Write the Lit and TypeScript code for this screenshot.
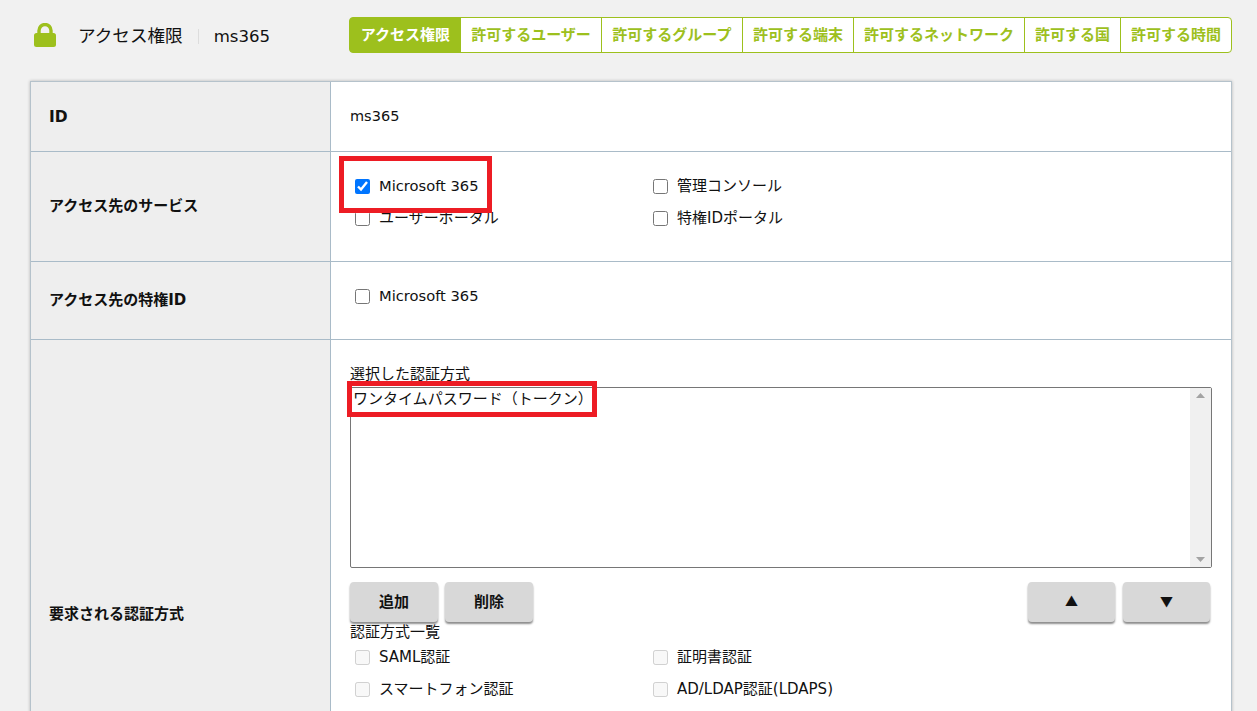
import { LitElement, html, css } from "lit";
import { customElement } from "lit/decorators.js";

const TABS = ["アクセス権限", "許可するユーザー", "許可するグループ", "許可する端末", "許可するネットワーク", "許可する国", "許可する時間"];

@customElement("app-root")
export class AppRoot extends LitElement {
  static styles = css`
    :host { display: block; height: 711px; overflow: hidden; background: #f1f1f1; color: #111;
      font-family: "DejaVu Sans", "Noto Sans CJK JP", sans-serif; font-size: 15px; position: relative; }
    * { box-sizing: border-box; }
    header { display: flex; align-items: center; height: 70px; padding: 0 25px 0 34px; }
    .lock { width: 22px; height: 24px; flex: none; }
    .title { margin: 2px 0 0 22px; font-size: 17.6px; padding-right: 15px; border-right: 1px solid #ddd; line-height: 15px; }
    .sub { margin: 2px 0 0 15px; font-size: 16.6px; }
    .tabs { margin-left: auto; display: flex; height: 36px; }
    .tab { display: flex; align-items: center; justify-content: center; padding: 0 10px; font-weight: 700; color: #9dc01d;
      background: #fff; border: 1px solid #9dc01d; margin-left: -1px; white-space: nowrap; line-height: 1; }
    .tab:first-child { background: #9dc01d; color: #fff; border-radius: 4px 0 0 4px; margin-left: 0; padding: 0 10px 0 11px; }
    .tab:nth-child(3) { padding: 0 10.5px; }
    .tab:last-child { border-radius: 0 4px 4px 0; }
    .table { margin: 11px 25px 0 30px; background: #fff; border: 1px solid #b5c2cb; box-shadow: 0 0 3px rgba(0,0,0,.25); }
    .row { display: grid; grid-template-columns: 300px 1fr; border-top: 1px solid #a9bbc8; }
    .row:first-child { border-top: 0; }
    .th { background: #eee; border-right: 1px solid #a9bbc8; font-weight: 700; display: flex; align-items: center; padding: 0 18px 4px; font-size: 15px; }
    .r1 .th { padding-bottom: 0; font-size: 15.5px; }
    .td { padding: 0 19px 0 19px; min-width: 0; }
    .r1 { height: 69px; } .r1 .td { display: flex; align-items: center; padding-bottom: 2px; font-size: 14.5px; }
    .r2 { height: 110px; } .r3 { height: 78px; } .r4 { height: 550px; }
    .checks { display: grid; grid-template-columns: repeat(2, 298px); grid-auto-rows: 32px; padding-left: 5px; }
    .r2 .checks { padding-top: 18px; }
    .r3 .checks { padding-top: 18px; }
    label { display: flex; align-items: center; height: 32px; white-space: nowrap; }
    label span { display: block; height: 20px; line-height: 20px; }
    label span.latin { font-size: 14.7px; }
    input { width: 15px; height: 15px; margin: 0 9px 0 0; flex: none; }
    .cap { line-height: 18px; margin-bottom: 4px; }
    .r4 .td { padding-top: 25px; }
    .listbox { height: 181px; border: 1px solid #767676; border-radius: 2px; display: flex; background: #fff; }
    .items { flex: 1; padding: 1px 2px; line-height: 20px; }
    .bar { width: 21px; background: #f0f0f0; display: flex; flex-direction: column; justify-content: space-between; align-items: center; padding: 5px 0; }
    .bar svg { width: 9px; height: 5px; display: block; }
    .btns { display: flex; justify-content: space-between; margin-top: 14px; padding-right: 2px; }
    .group { display: flex; gap: 7px; }
    .group.right { gap: 8px; }
    button { width: 88px; height: 40px; border: 0; border-radius: 4px; background: #d8d8d8; color: #111; font: inherit; font-weight: 700; font-size: 15px;
      box-shadow: 0 2px 2px rgba(0,0,0,.45); padding: 0 0 4px; }
    button.arrow { width: 87px; font-size: 13px; font-family: "Noto Sans CJK JP", sans-serif; }
    .cap2 { line-height: 20px; }
    .r4 .checks { margin-top: -1px; }
    .mark { position: absolute; border: 5px solid #ed1c24; pointer-events: none; }
    .m1 { left: 339px; top: 156px; width: 153px; height: 57px; }
    .m2 { left: 347px; top: 381px; width: 250px; height: 36px; }
  `;

  private check(text: string, opts: { checked?: boolean; disabled?: boolean } = {}) {
    const latin = /^[\x20-\x7e]+$/.test(text);
    return html`<label><input type="checkbox" .checked=${!!opts.checked} ?disabled=${!!opts.disabled} /><span class=${latin ? "latin" : ""}>${text}</span></label>`;
  }

  render() {
    return html`
      <header>
        <svg class="lock" viewBox="0 0 22 24" aria-hidden="true">
          <path d="M5 11V7.5a6 6 0 0 1 12 0V11" fill="none" stroke="#9dc01d" stroke-width="3.4" />
          <rect x="0" y="10" width="22" height="14" rx="2.5" fill="#9dc01d" />
        </svg>
        <span class="title">アクセス権限</span>
        <span class="sub">ms365</span>
        <nav class="tabs">${TABS.map((t) => html`<div class="tab">${t}</div>`)}</nav>
      </header>
      <main class="table">
        <section class="row r1"><div class="th">ID</div><div class="td">ms365</div></section>
        <section class="row r2">
          <div class="th">アクセス先のサービス</div>
          <div class="td"><div class="checks">
            ${this.check("Microsoft 365", { checked: true })}
            ${this.check("管理コンソール")}
            ${this.check("ユーザーポータル")}
            ${this.check("特権IDポータル")}
          </div></div>
        </section>
        <section class="row r3">
          <div class="th">アクセス先の特権ID</div>
          <div class="td"><div class="checks">${this.check("Microsoft 365")}</div></div>
        </section>
        <section class="row r4">
          <div class="th">要求される認証方式</div>
          <div class="td">
            <div class="cap">選択した認証方式</div>
            <div class="listbox">
              <div class="items">ワンタイムパスワード（トークン）</div>
              <div class="bar">
                <svg viewBox="0 0 9 5"><path d="M4.5 0L9 5H0z" fill="#a3a3a3" /></svg>
                <svg viewBox="0 0 9 5"><path d="M4.5 5L9 0H0z" fill="#a3a3a3" /></svg>
              </div>
            </div>
            <div class="btns">
              <div class="group"><button>追加</button><button>削除</button></div>
              <div class="group right"><button class="arrow">▲</button><button class="arrow">▼</button></div>
            </div>
            <div class="cap2">認証方式一覧</div>
            <div class="checks">
              ${this.check("SAML認証", { disabled: true })}
              ${this.check("証明書認証", { disabled: true })}
              ${this.check("スマートフォン認証", { disabled: true })}
              ${this.check("AD/LDAP認証(LDAPS)", { disabled: true })}
            </div>
          </div>
        </section>
      </main>
      <div class="mark m1"></div>
      <div class="mark m2"></div>
    `;
  }
}
